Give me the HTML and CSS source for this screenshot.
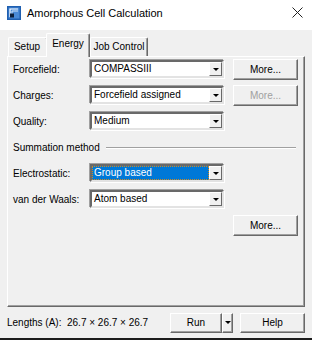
FILE: index.html
```html
<!DOCTYPE html>
<html>
<head>
    <title>Amorphous Cell Calculation</title>
    <link rel="stylesheet" href="styles.css">
</head>
<body>
    <div class="window">
        <div class="titlebar">
            <svg class="appicon" width="14" height="14" viewBox="0 0 14 14">
                <rect x="0" y="0" width="14" height="14" fill="#1f5fb0"/>
                <rect x="1.5" y="1.5" width="11" height="11" fill="#4a8ad6"/>
                <path d="M3 11 V3 H11" fill="none" stroke="#ffffff" stroke-width="1.2"/>
                <path d="M5 11 V5 H11" fill="none" stroke="#cfe2f7" stroke-width="1"/>
                <rect x="3" y="7.5" width="4" height="4" fill="#0d1f3a"/>
            </svg>
            <span class="title">Amorphous Cell Calculation</span>
            <svg class="close" width="11" height="11" viewBox="0 0 11 11">
                <path d="M0.5 0.5 L10.5 10.5 M10.5 0.5 L0.5 10.5" stroke="#222" stroke-width="1"/>
            </svg>
        </div>

        <div class="tabs">
            <div class="tab setup">Setup</div>
            <div class="tab active">Energy</div>
            <div class="tab job">Job Control</div>
        </div>

        <div class="panel">
            <div class="row">
                <span class="label">Forcefield:</span>
                <div class="combo"><span class="value">COMPASSIII</span><span class="arrow"></span></div>
                <button class="btn more">More...</button>
            </div>
            <div class="row">
                <span class="label">Charges:</span>
                <div class="combo"><span class="value">Forcefield assigned</span><span class="arrow"></span></div>
                <button class="btn more disabled">More...</button>
            </div>
            <div class="row">
                <span class="label">Quality:</span>
                <div class="combo"><span class="value">Medium</span><span class="arrow"></span></div>
            </div>
            <div class="row group">
                <span>Summation method</span>
                <span class="rule"></span>
            </div>
            <div class="row">
                <span class="label">Electrostatic:</span>
                <div class="combo focused"><span class="value">Group based</span><span class="arrow"></span></div>
            </div>
            <div class="row">
                <span class="label">van der Waals:</span>
                <div class="combo"><span class="value">Atom based</span><span class="arrow"></span></div>
            </div>
            <div class="row right">
                <button class="btn more">More...</button>
            </div>
        </div>

        <div class="footer">
            <span class="lengths">Lengths (A):</span>
            <span class="dims">26.7 × 26.7 × 26.7</span>
            <div class="split">
                <button class="btn run">Run</button>
                <button class="btn drop"><span class="arrow-glyph"></span></button>
            </div>
            <button class="btn help">Help</button>
        </div>
        <div class="edge"></div>
    </div>
</body>
</html>
```

FILE: styles.css
```css
body {
    margin: 0;
    background: #f0f0f0;
    font-family: "Liberation Sans", Arial, sans-serif;
    font-size: 10px;
    color: #000000;
}

.window {
    width: 312px;
    height: 340px;
    background: #f0f0f0;
    display: flex;
    flex-direction: column;
}

.titlebar {
    height: 30px;
    background: #ffffff;
    display: flex;
    align-items: center;
    padding: 0 9px 0 7px;
}

.appicon {
    margin-right: 6px;
    margin-top: -3px;
}

.title {
    font-size: 11px;
    flex: 1;
    margin-top: -3px;
}

.close {
    margin-top: -4px;
}

.tabs {
    display: flex;
    align-items: flex-end;
    height: 26px;
    padding-left: 8px;
}

.tab {
    box-sizing: border-box;
    height: 19px;
    line-height: 18px;
    text-align: center;
    border-top: 1px solid #ffffff;
    border-left: 1px solid #ffffff;
    border-right: 1px solid #696969;
    box-shadow: inset -1px 0 #a0a0a0;
    border-radius: 2px 2px 0 0;
}

.tab.setup {
    width: 40px;
    padding-right: 2px;
}

.tab.active {
    width: 44px;
    height: 24px;
    line-height: 20px;
    margin: 0 0 -1px -2px;
    background: #f0f0f0;
    position: relative;
    z-index: 1;
}

.tab.job {
    width: 58px;
}

.panel {
    margin: 0 7px;
    height: 248px;
    border-top: 1px solid #ffffff;
    border-left: 1px solid #ffffff;
    border-right: 1px solid #696969;
    border-bottom: 1px solid #696969;
    box-shadow: inset -1px -1px #a0a0a0;
    padding: 2px 0 0 5px;
    display: flex;
    flex-direction: column;
    gap: 5px;
}

.row {
    height: 21px;
    display: flex;
    align-items: center;
}

.label {
    width: 77px;
}

.combo {
    width: 130px;
    height: 14px;
    background: #ffffff;
    border-top: 2px solid #696969;
    border-left: 2px solid #696969;
    border-right: 2px solid #e3e3e3;
    border-bottom: 2px solid #e3e3e3;
    box-shadow: -1px -1px 0 #a0a0a0, 1px 1px 0 #ffffff;
    display: flex;
    align-items: center;
}

.value {
    flex: 1;
    height: 14px;
    line-height: 14px;
    padding-left: 2px;
    white-space: nowrap;
    overflow: hidden;
}

.combo.focused .value {
    background: #0078d7;
    color: #ffffff;
    outline: 1px dotted #d08a20;
    outline-offset: -1px;
}

.arrow {
    box-sizing: border-box;
    width: 13px;
    height: 14px;
    background: #f0f0f0;
    border-top: 1px solid #ffffff;
    border-left: 1px solid #ffffff;
    border-right: 1px solid #696969;
    border-bottom: 1px solid #696969;
    display: flex;
    align-items: center;
    justify-content: center;
}

.arrow::after,
.arrow-glyph::after {
    content: "";
    border-left: 3px solid transparent;
    border-right: 3px solid transparent;
    border-top: 3px solid #000000;
}

.btn {
    font-family: "Liberation Sans", Arial, sans-serif;
    font-size: 10px;
    color: #000000;
    background: #f0f0f0;
    height: 21px;
    padding: 0;
    border-top: 1px solid #ffffff;
    border-left: 1px solid #ffffff;
    border-right: 1px solid #696969;
    border-bottom: 1px solid #696969;
    box-shadow: inset -1px -1px #a0a0a0;
    border-radius: 0;
}

.more {
    width: 65px;
    margin-left: 9px;
}

.disabled {
    color: #a0a0a0;
}

.group .rule {
    flex: 1;
    height: 1px;
    background: #a0a0a0;
    border-bottom: 1px solid #ffffff;
    margin: 1px 8px 0 6px;
}

.right {
    justify-content: flex-end;
    padding-right: 6px;
}

.footer {
    height: 31px;
    display: flex;
    align-items: center;
    padding: 0 7px;
}

.lengths {
    width: 60px;
}

.dims {
    flex: 1;
}

.split {
    display: flex;
    margin-right: 7px;
}

.run {
    width: 52px;
    height: 20px;
}

.drop {
    width: 11px;
    height: 20px;
    display: flex;
    align-items: center;
    justify-content: center;
}

.arrow-glyph {
    display: flex;
}

.help {
    width: 65px;
    height: 20px;
}

.edge {
    margin-top: auto;
    height: 2px;
    background: #1c1c1c;
}
```
